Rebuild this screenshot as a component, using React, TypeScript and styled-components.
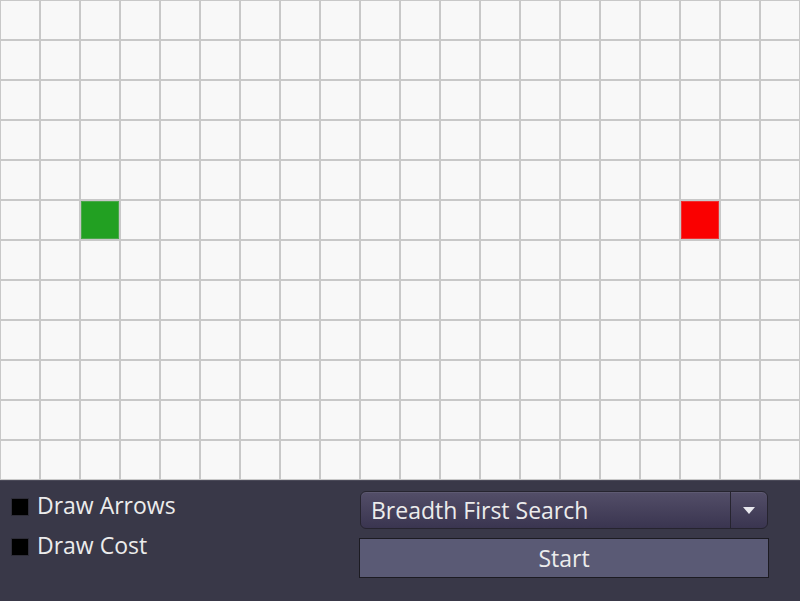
import React from "react";
import styled, { createGlobalStyle } from "styled-components";

const GlobalStyle = createGlobalStyle`
  html, body { margin: 0; padding: 0; background: #393848; overflow: hidden; }
  body { font-family: "Open Sans", "Noto Sans", sans-serif; }
`;

const COLS = 20;
const ROWS = 12;
const START = { r: 5, c: 2 };
const END = { r: 5, c: 17 };

const Page = styled.div`
  width: 800px;
  height: 601px;
  display: flex;
  flex-direction: column;
  overflow: hidden;
`;

const Grid = styled.div`
  display: grid;
  grid-template-columns: repeat(${COLS}, 40px);
  grid-auto-rows: 40px;
  background: #f8f8f8;
`;

const Cell = styled.div<{ $kind: "empty" | "start" | "end" }>`
  box-sizing: border-box;
  border: 1px solid #c8c8c8;
  background: ${(p) => (p.$kind === "start" ? "#22a022" : p.$kind === "end" ? "#fa0000" : "#f8f8f8")};
  box-shadow: ${(p) =>
    p.$kind === "empty" ? "none" : "inset 0 0 0 1px " + (p.$kind === "start" ? "#4aa84a" : "#f03030")};
`;

const Panel = styled.div`
  flex: 1;
  background: #393848;
  border-top: 1px solid #4a4958;
  display: grid;
  grid-template-columns: 359px 409px;
  position: relative;
`;

const Options = styled.div`
  display: flex;
  flex-direction: column;
  gap: 12px;
  padding: 10px 0 0 11px;
`;

const OptionRow = styled.label`
  display: flex;
  align-items: center;
  gap: 8px;
  height: 28px;
  color: #ececec;
  font-size: 23px;
`;

const Box = styled.span`
  width: 18px;
  height: 18px;
  margin-top: 3px;
  box-sizing: border-box;
  background: #000;
  border: 1px solid #2e2d38;
  border-radius: 1px;
`;

const Controls = styled.div`
  display: flex;
  flex-direction: column;
  padding-top: 10px;
  gap: 9px;
`;

const Select = styled.div`
  margin-left: 1px;
  width: 408px;
  height: 38px;
  box-sizing: border-box;
  border-radius: 6px;
  border: 1px solid #26242f;
  background: linear-gradient(#534e68, #3a3550);
  box-shadow: inset 0 1px 0 #5e5a72;
  display: flex;
  align-items: center;
  color: #ececec;
  font-size: 23px;
`;

const SelectText = styled.span`
  flex: 1;
  padding-left: 10px;
  padding-bottom: 1px;
`;

const Arrow = styled.span`
  width: 36px;
  height: 100%;
  border-left: 1px solid #26242f;
  display: flex;
  align-items: center;
  justify-content: center;
`;

const StartButton = styled.button`
  width: 410px;
  height: 40px;
  box-sizing: border-box;
  border: 1px solid #1c1b22;
  background: #5a5a75;
  color: #ececec;
  font-family: "Open Sans", "Noto Sans", sans-serif;
  font-size: 23px;
  line-height: 1;
  padding: 0;
  text-align: center;
`;

const Footer = styled.div`
  position: absolute;
  left: 100px;
  top: 115px;
  font-size: 16px;
  line-height: 22px;
  color: #ddd;
  white-space: nowrap;
  display: flex;
  gap: 8px;
`;

const Pink = styled.span`
  color: #d0307a;
`;

export default function App() {
  const cells = [];
  for (let r = 0; r < ROWS; r++) {
    for (let c = 0; c < COLS; c++) {
      const kind =
        r === START.r && c === START.c ? "start" : r === END.r && c === END.c ? "end" : "empty";
      cells.push(<Cell key={`${r}-${c}`} $kind={kind} />);
    }
  }
  return (
    <Page>
      <GlobalStyle />
      <Grid>{cells}</Grid>
      <Panel>
        <Options>
          <OptionRow>
            <Box />
            Draw Arrows
          </OptionRow>
          <OptionRow>
            <Box />
            Draw Cost
          </OptionRow>
        </Options>
        <Controls>
          <Select>
            <SelectText>Breadth First Search</SelectText>
            <Arrow>
              <svg width="12" height="7" viewBox="0 0 12 7">
                <path d="M0 0 H12 L6 7 Z" fill="#e8e8ee" />
              </svg>
            </Arrow>
          </Select>
          <StartButton>Start</StartButton>
        </Controls>
        <Footer>
          <Pink>Start</Pink>
          <span>node.</span>
          <Pink>End</Pink>
          <span>node, walls, wall</span>
        </Footer>
      </Panel>
    </Page>
  );
}
